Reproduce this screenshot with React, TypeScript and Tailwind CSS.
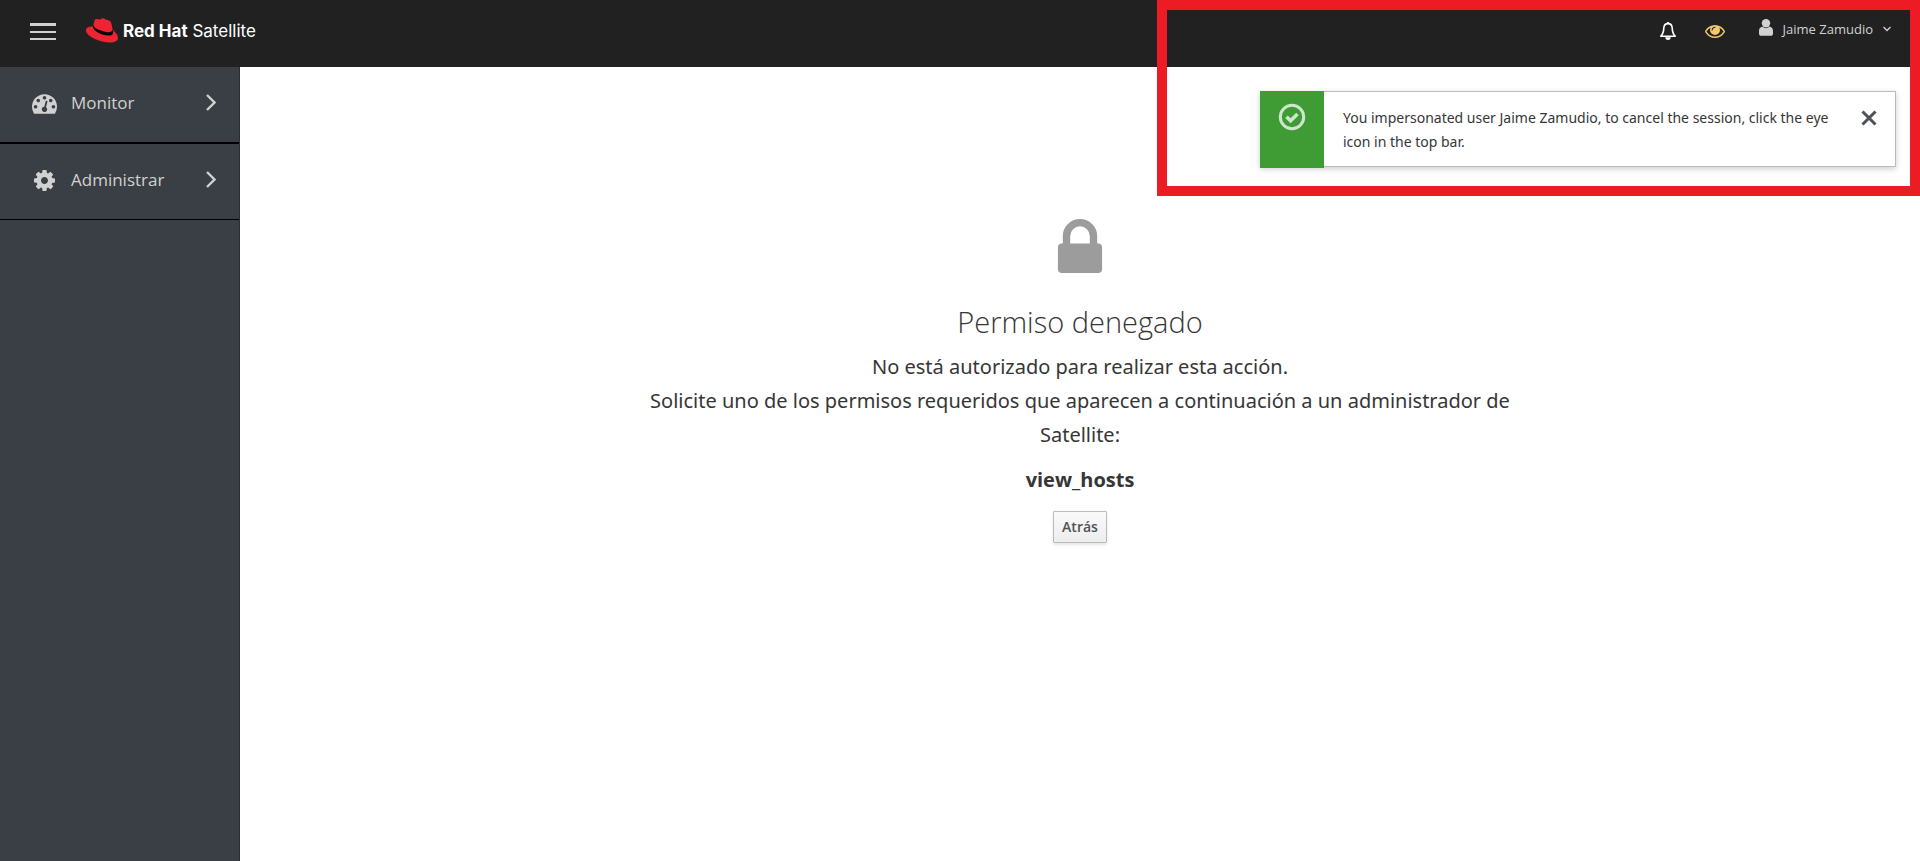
import React from "react";
import type { ReactNode } from "react";

function Icon({ box, className, children }: { box: string; className: string; children: ReactNode }) {
  return (
    <svg viewBox={box} className={className} fill="currentColor" aria-hidden="true">
      {children}
    </svg>
  );
}

function GaugeIcon() {
  return (
    <Icon box="0 128 1792 1664" className="h-6 w-[25px]">
      <path d="M384 1152q0-53-37.5-90.5T256 1024t-90.5 37.5T128 1152t37.5 90.5T256 1280t90.5-37.5T384 1152zm192-448q0-53-37.5-90.5T448 576t-90.5 37.5T320 704t37.5 90.5T448 832t90.5-37.5T576 704zm428 481l101-382q6-26-7.5-48.5T1059 725t-48 6.5-30 39.5l-101 382q-60 5-107 43.5t-63 98.5q-20 77 20 146t117 89 146-20 89-117q16-60-6-117t-72-91zm660-33q0-53-37.5-90.5T1536 1024t-90.5 37.5-37.5 90.5 37.5 90.5 90.5 37.5 90.5-37.5 37.5-90.5zm-640-640q0-53-37.5-90.5T896 384t-90.5 37.5T768 512t37.5 90.5T896 640t90.5-37.5T1024 512zm448 192q0-53-37.5-90.5T1344 576t-90.5 37.5T1216 704t37.5 90.5T1344 832t90.5-37.5T1472 704zm320 448q0 261-141 483-19 29-54 29H195q-35 0-54-29Q0 1414 0 1152q0-182 71-348t191-286 286-191 348-71 348 71 286 191 191 286 71 348z" />
    </Icon>
  );
}

function CogIcon() {
  return (
    <Icon box="128 128 1536 1536" className="h-[21px] w-[25px]">
      <path d="M1152 896q0-106-75-181t-181-75-181 75-75 181 75 181 181 75 181-75 75-181zm512-109v222q0 12-8 23t-20 13l-185 28q-19 54-39 91 35 50 107 138 10 12 10 25t-9 23q-27 37-99 108t-94 71q-12 0-26-9l-138-108q-44 23-91 38-16 136-29 186-7 28-36 28H785q-14 0-24.5-8.5T749 1635l-28-184q-49-16-90-37l-141 107q-10 9-25 9-14 0-25-11-126-114-165-168-7-10-7-23 0-12 8-23 15-21 51-66.5t54-70.5q-27-50-41-99l-183-27q-13-2-21-12.5t-8-23.5V785q0-12 8-23t19-13l186-28q14-46 39-92-40-57-107-138-10-12-10-24 0-10 9-23 26-36 98.5-107.5T465 258q13 0 26 10l138 107q44-23 91-38 16-136 29-186 7-28 36-28h222q14 0 24.5 8.5T1044 155l28 184q49 16 90 37l142-107q9-9 24-9 13 0 25 10 129 119 165 170 7 8 7 22 0 12-8 23-15 21-51 66.5t-54 70.5q26 50 41 98l183 28q13 2 21 12.5t8 23.5z" />
    </Icon>
  );
}

function EyeIcon() {
  return (
    <Icon box="0 384 1792 1152" className="h-[13px] w-5">
      <path d="M1664 960q-152-236-381-353 61 104 61 225 0 185-131.5 316.5T896 1280t-316.5-131.5T448 832q0-121 61-225-229 117-381 353 133 205 333.5 326.5T896 1408t434.5-121.5T1664 960zM944 576q0-20-14-34t-34-14q-125 0-214.5 89.5T592 832q0 20 14 34t34 14 34-14 14-34q0-86 61-147t147-61q20 0 34-14t14-34zm848 384q0 34-20 69-140 230-376.5 368.5T896 1536t-499.5-139T20 1029Q0 994 0 960t20-69q140-229 376.5-368T896 384t499.5 139T1772 891q20 35 20 69z" />
    </Icon>
  );
}

function LockIcon() {
  return (
    <Icon box="0 128 1152 1408" className="h-[54px] w-[46px] text-[#9c9c9c]">
      <path d="M320 768h512V576q0-106-75-181t-181-75-181 75-75 181v192zm832 96v576q0 40-28 68t-68 28H96q-40 0-68-28t-28-68V864q0-40 28-68t68-28h32V576q0-184 132-316t316-132 316 132 132 316v192h32q40 0 68 28t28 68z" />
    </Icon>
  );
}

function BellIcon() {
  return (
    <Icon box="0 0 18 20" className="h-5 w-[18px]">
      <path
        d="M9 2.6C6.200 2.600 4.900 4.500 4.800 7C4.700 10.500 4.100 13 1.800 15.200H16.200C13.900 13 13.300 10.500 13.200 7C13.100 4.500 11.800 2.600 9 2.600Z"
        fill="none"
        stroke="currentColor"
        strokeWidth="1.600"
        strokeLinejoin="round"
      />
      <path d="M8.100 1h1.800v2H8.100zM6.300 16.200h5.400A2.700 2.700 0 0 1 6.300 16.200z" />
    </Icon>
  );
}

function UserIcon() {
  return (
    <Icon box="0 0 14 17" className="mb-[3px] h-[17px] w-3.5">
      <circle cx="7" cy="4.300" r="4.200" />
      <path d="M3.400 7.600C1.200 8.200 0 9.800 0 12v2.500C0 16 .8 16.800 2.300 16.800h9.400c1.500 0 2.300-.8 2.300-2.300V12c0-2.200-1.200-3.800-3.400-4.400a5 5 0 0 1-7.200 0z" />
    </Icon>
  );
}

function HatLogo() {
  return (
    <svg viewBox="0 0 32 25" className="h-[25px] w-8" aria-hidden="true">
      <path
        fill="#ee2433"
        d="M7 8.500 8.400 3C8.800 1.400 9.800.8 11.200 1c1 .2 1.900.6 2.900.4C15 1.200 15.600.1 16.900.2c1.300.1 2 .9 3.100 1.300 1.800.5 4 1 4.800 2.600.9 1.900 1.300 4.700 1.900 7.800 1.900 1.700 5.100 4.300 5.300 7.600.1 3.800-3.900 5.300-8.700 5-7.700-.5-15.600-3.200-20.400-7.200C.9 15.600-.2 13.600 0 11.800.3 9.500 3.300 8.400 7 8.500z"
      />
      <path
        fill="#000"
        d="M6.900 8.800C7 11 9 13 12.300 14.700c3.600 1.900 8 3 11.400 2.700 2.300-.2 3.500-1.200 3.500-2.700 0-1.100-.3-2-.8-3.100.1 1.500-.8 2.300-2.700 2.500-2.900.3-7-.5-10.500-2C10.200 10.800 8 9.200 7.500 7z"
      />
    </svg>
  );
}

function Chevron() {
  return (
    <svg viewBox="0 0 10 17" className="ml-auto h-[17px] w-2.5" fill="none" stroke="currentColor" strokeWidth="2.400" aria-hidden="true">
      <path d="M1 1l7.500 7.500L1 16" />
    </svg>
  );
}

function NavItem({ icon, label, className }: { icon: ReactNode; label: string; className: string }) {
  return (
    <li className={className}>
      <button type="button" className="flex h-[75px] w-full items-center pr-[23px] pb-1 pl-8 text-[17px] text-[#d1d1d1]">
        <span className="pt-[2px]">{icon}</span>
        <span className="ml-3.5">{label}</span>
        <Chevron />
      </button>
    </li>
  );
}

export default function App() {
  return (
    <div className="relative flex min-h-screen flex-col bg-white font-['Open_Sans',sans-serif] text-[#363636]">
      <header className="flex h-[67px] items-start bg-[#212121] pr-[29px] pl-[30px] text-[#d1d1d1]">
        <button type="button" aria-label="Menu" className="mt-[23px] flex w-[26px] flex-col gap-[5px]">
          <span className="h-[3px] w-full bg-current" />
          <span className="h-0.5 w-full bg-current" />
          <span className="h-0.5 w-full bg-current" />
        </button>
        <a href="#" className="mt-[18px] ml-[30px] flex items-center text-white">
          <HatLogo />
          <span className="ml-[5px] font-['Inter',sans-serif] text-[17px] leading-6">
            <b>Red Hat</b> Satellite
          </span>
        </a>
        <div className="mt-[17px] ml-auto flex items-center">
          <button type="button" aria-label="Notifications" className="mt-1 text-white">
            <BellIcon />
          </button>
          <button type="button" aria-label="Stop impersonation" className="mt-1 ml-7 text-[#f3c969]">
            <EyeIcon />
          </button>
          <button type="button" className="ml-[34px] flex items-center text-[13px] leading-[22px]">
            <UserIcon />
            <span className="ml-2.5">Jaime Zamudio</span>
            <svg viewBox="0 0 8 6" className="ml-2.5 h-1.5 w-2" fill="none" stroke="currentColor" strokeWidth="1.300" aria-hidden="true">
              <path d="M.5 1 4 4.500 7.500 1" />
            </svg>
          </button>
        </div>
      </header>
      <div className="flex flex-1">
        <nav className="w-60 shrink-0 border-r border-[#292e34] bg-[#393f44]">
          <ul>
            <NavItem icon={<GaugeIcon />} label="Monitor" className="border-b-2 border-black" />
            <NavItem icon={<CogIcon />} label="Administrar" className="border-b border-black" />
          </ul>
        </nav>
        <main className="flex flex-1 flex-col items-center pt-[152px] text-center">
          <LockIcon />
          <h1 className="mt-[29px] text-[29px] leading-10 font-light">Permiso denegado</h1>
          <p className="mt-2 max-w-[900px] font-['Noto_Sans',sans-serif] text-[20px] leading-[34px]">
            No está autorizado para realizar esta acción.
            <br />
            Solicite uno de los permisos requeridos que aparecen a continuación a un administrador de Satellite:
          </p>
          <p className="mt-[11px] text-[20px] leading-[34px] font-bold">view_hosts</p>
          <button
            type="button"
            className="mt-3.5 rounded-[1px] border border-[#bbb] bg-linear-to-b from-[#fafafa] to-[#ededed] px-[8px] py-1 text-[14px] leading-[22px] font-semibold text-[#4d5258] shadow-[0_2px_3px_rgba(3,3,3,0.1)]"
          >
            Atrás
          </button>
        </main>
      </div>
      <div className="absolute top-[91px] right-6 flex w-[636px] shadow-[0_2px_6px_rgba(3,3,3,0.2)]" role="status">
        <div className="-mb-px flex w-16 shrink-0 justify-center bg-[#3f9c35] pt-3">
          <svg viewBox="0 0 28 28" className="h-7 w-7 text-[#cfe6cc]" fill="none" stroke="currentColor" aria-hidden="true">
            <circle cx="14" cy="14" r="11.700" strokeWidth="3" />
            <path d="M8.500 13.800 12.600 17.800 19.500 11" strokeWidth="3.600" />
          </svg>
        </div>
        <div className="flex flex-1 items-start border border-l-0 border-[#bbb] bg-white pt-3.5 pb-3 pr-[18px] pl-[19px]">
          <p className="flex-1 font-['Noto_Sans',sans-serif] text-[14px] leading-6">
            You impersonated user Jaime Zamudio, to cancel the session, click the eye icon in the top bar.
          </p>
          <button type="button" aria-label="Close" className="mt-1 ml-4 text-[#4d5258]">
            <svg viewBox="0 0 16 16" className="h-4 w-4" fill="none" stroke="currentColor" strokeWidth="3" aria-hidden="true">
              <path d="M1.500 1.500l13 13M14.500 1.500l-13 13" />
            </svg>
          </button>
        </div>
      </div>
      <div className="pointer-events-none absolute top-0 right-0 h-[196px] w-[763px] border-10 border-[#ed1c24]" />
    </div>
  );
}
